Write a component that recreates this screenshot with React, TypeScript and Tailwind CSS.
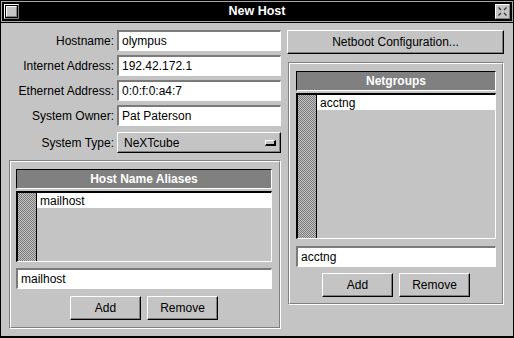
import React from "react";

const field = "h-[21px] bg-white border-t-2 border-l-2 border-t-[#7a7a7a] border-l-[#7a7a7a] border-b border-r border-b-white border-r-white flex items-center pl-[3px] text-[12px] text-black";
const button = "h-[24px] bg-[#c4c4c4] border-t border-l border-t-white border-l-white border-b border-r border-b-black border-r-black shadow-[inset_-1px_-1px_0_#808080] flex items-center justify-center text-[12px] text-black";
const checker = "bg-[conic-gradient(#7a7a7a_25%,#c4c4c4_0_50%,#7a7a7a_0_75%,#c4c4c4_0)] bg-[length:2px_2px]";

const FormRow = ({ label, value }: { label: string; value: string }) => (
  <div className="flex items-center h-[21px]">
    <div className="w-[105px] text-right text-[12px] text-black pr-[0px]">{label}</div>
    <div className={field + " ml-[3px] flex-1"}>{value}</div>
  </div>
);

const ListBox = ({ title, item, height }: { title: string; item: string; height: string }) => (
  <>
    <div className="h-[20px] bg-[#808080] border-t border-l border-t-black border-l-black border-b border-r border-b-white border-r-white flex items-center justify-center text-white font-bold text-[12px]">
      {title}
    </div>
    <div className={"mt-[2px] flex border-t-2 border-l-2 border-t-black border-l-black border-b border-r border-b-white border-r-white " + height}>
      <div className={"w-[19px] border-r border-r-black " + checker}></div>
      <div className="flex-1">
        <div className="h-[15px] bg-white flex items-center pl-[3px] text-[12px] text-black">{item}</div>
      </div>
    </div>
  </>
);

const Group = ({ children, className }: { children: React.ReactNode; className: string }) => (
  <div className={"border-t border-l border-t-[#808080] border-l-[#808080] border-b border-r border-b-white border-r-white " + className}>
    <div className="h-full border-t border-l border-t-white border-l-white border-b border-r border-b-[#808080] border-r-[#808080] flex flex-col">
      {children}
    </div>
  </div>
);

export default function App() {
  return (
    <div className="w-[514px] h-[338px] bg-[#c4c4c4] border-t border-l border-r border-b-2 border-black flex flex-col font-['Liberation_Sans',Arial,sans-serif] select-none">
      {/* title bar */}
      <div className="h-[21px] bg-black border border-[#a8a8a8] flex items-center px-[2px]">
        <div className="w-[15px] h-[15px] border-t border-l border-t-white border-l-white border-b border-r border-b-[#808080] border-r-[#808080] bg-black p-[1px]">
          <div className="w-full h-full bg-[#c4c4c4] border-t border-l border-t-white border-l-white border-b border-r border-b-[#808080] border-r-[#808080]"></div>
        </div>
        <div className="flex-1 text-center text-white font-bold text-[12.5px]">New Host</div>
        <div className="w-[15px] h-[15px] bg-[#c4c4c4] border-t border-l border-t-white border-l-white border-b border-r border-b-[#808080] border-r-[#808080] flex items-center justify-center">
          <svg width="13" height="13" viewBox="0 0 13 13">
            <path d="M2.5 2.5 L5 5 M10.5 2.5 L8 5 M2.5 10.5 L5 8 M10.5 10.5 L8 8" stroke="#333" strokeWidth="1.2" fill="none" />
          </svg>
        </div>
      </div>
      <div className="h-px bg-black"></div>

      {/* content */}
      <div className="flex-1 flex pl-[8px] pt-[7px] gap-[6px]">
        <div className="w-[272px] flex flex-col">
          <div className="flex flex-col gap-[4px]">
            <FormRow label="Hostname:" value="olympus" />
            <FormRow label="Internet Address:" value="192.42.172.1" />
            <FormRow label="Ethernet Address:" value="0:0:f:0:a4:7" />
            <FormRow label="System Owner:" value="Pat Paterson" />
          </div>
          <div className="flex items-center h-[21px] mt-[6px]">
            <div className="w-[105px] text-right text-[12px] text-black">System Type:</div>
            <div className="ml-[3px] flex-1 h-[21px] bg-[#c4c4c4] border-t border-l border-t-white border-l-white border-b border-r border-b-black border-r-black shadow-[inset_-1px_-1px_0_#808080] flex items-center pl-[6px] pr-[4px] text-[12px] text-black">
              <span className="flex-1">NeXTcube</span>
              <div className="w-[11px] h-[6px] bg-[#c4c4c4] border-t border-l border-t-white border-l-white border-b-2 border-r-2 border-b-black border-r-black"></div>
            </div>
          </div>

          <Group className="mt-[7px] h-[169px]">
            <div className="flex flex-col pt-[7px] pl-[5px] pr-[7px]">
              <ListBox title="Host Name Aliases" item="mailhost" height="h-[71px]" />
              <div className={field + " mt-[6px]"}>mailhost</div>
              <div className="mt-[7px] flex justify-center gap-[6px]">
                <div className={button + " w-[71px]"}>Add</div>
                <div className={button + " w-[71px]"}>Remove</div>
              </div>
            </div>
          </Group>
        </div>

        <div className="w-[217px] flex flex-col">
          <div className={button + " w-full"}>Netboot Configuration...</div>
          <Group className="mt-[8px] ml-[1px] h-[243px]">
            <div className="flex flex-col pt-[7px] px-[6px]">
              <ListBox title="Netgroups" item="acctng" height="h-[146px]" />
              <div className={field + " mt-[7px]"}>acctng</div>
              <div className="mt-[6px] flex justify-center gap-[6px]">
                <div className={button + " w-[71px]"}>Add</div>
                <div className={button + " w-[71px]"}>Remove</div>
              </div>
            </div>
          </Group>
        </div>
      </div>
    </div>
  );
}
